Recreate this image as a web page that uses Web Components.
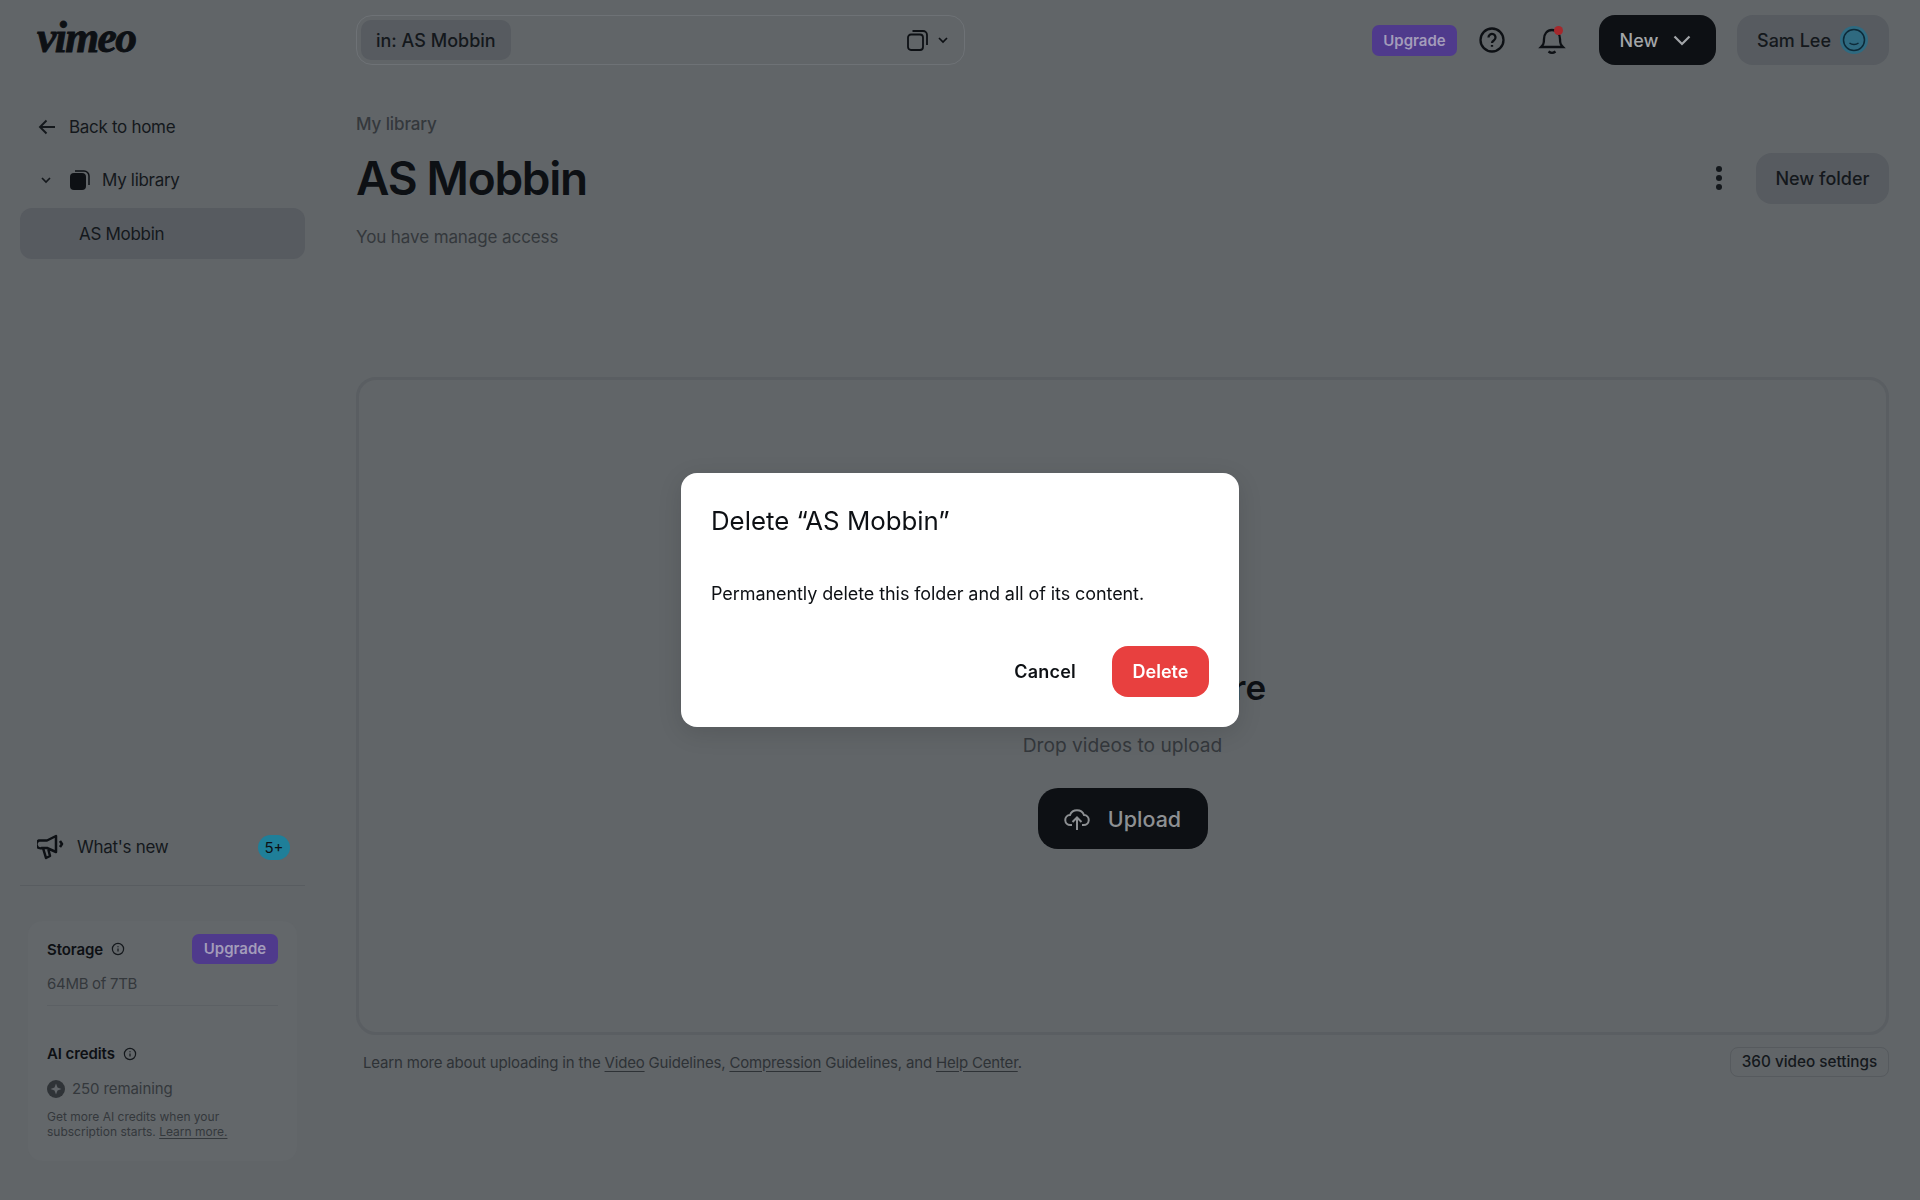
<!DOCTYPE html>
<html lang="en">
<head>
<meta charset="utf-8">
<title>AS Mobbin</title>
<style>
  html, body { margin: 0; height: 100%; background: #616568; }
  body { font-family: Inter, "Liberation Sans", sans-serif; color: #0d1014; }
  #app { display: grid; grid-template-columns: 356px 1fr; grid-template-rows: 1fr; width: 1920px; height: 1200px; overflow: hidden; }
</style>
</head>
<body>
<div id="app">
  <vm-sidebar></vm-sidebar>
  <vm-main></vm-main>
</div>
<vm-dialog>
  <span slot="title">Delete “AS Mobbin”</span>
  Permanently delete this folder and all of its content.
</vm-dialog>

<script>
const info = `<svg width="14" height="14" viewBox="0 0 14 14" fill="none" stroke="#14181c" stroke-width="1.2"><circle cx="7" cy="7" r="5.6"/><path d="M7 6.4v3.2M7 4.2v1"/></svg>`

class VmSidebar extends HTMLElement{
    constructor(){
        super()
        this._shadowRoot = this.attachShadow({mode: 'open'})
    }
    connectedCallback(){
        this._shadowRoot.innerHTML = `
        <style>
            :host{ display: flex; flex-direction: column; height: 1200px; box-sizing: border-box; padding: 0 51px 39px 20px; font-size: 17px; letter-spacing: -.3px; color: #14181c; }
            .logo{ height: 80px; padding-left: 17px; font: italic 700 43.500px/74px "Liberation Serif", serif; letter-spacing: -1.6px; color: #0d1014; -webkit-text-stroke: .9px #0d1014; }
            .back{ display: flex; align-items: center; gap: 13px; height: 24px; margin: 35px 0 0 18px; }
            .lib{ display: flex; align-items: center; height: 24px; margin: 29px 0 0 21px; }
            .lib .ic{ margin: 0 12px 0 19px; }
            .active{ display: flex; align-items: center; height: 51px; margin-top: 16px; padding-left: 59px; background: #575b60; border-radius: 12px; }
            .spacer{ flex: 1; }
            .new{ display: flex; align-items: center; height: 32px; padding: 0 15px 0 17px; }
            .new span{ margin-left: 12px; flex: 1; }
            .new b{ width: 32px; height: 25px; border-radius: 13px; background: #1f7f99; font-weight: 400; font-size: 15px; letter-spacing: 0; text-align: center; line-height: 25px; color: #0d1014; }
            .rule{ height: 1px; background: #585c60; margin: 22px 0 35px; }
            .card{ margin: 0 8px; padding: 13px 19px 0; height: 240px; box-sizing: border-box; border-radius: 14px; background: #63676a; }
            .head{ display: flex; align-items: center; gap: 8px; font-size: 15px; font-weight: 600; letter-spacing: -.1px; color: #0d1014; }
            .up{ margin-left: auto; width: 86px; height: 30px; border-radius: 7px; background: #4f3a8c; color: #a39cba; font-size: 15px; font-weight: 600; letter-spacing: 0; text-align: center; line-height: 30px; }
            .muted{ color: #34383c; font-size: 15px; }
            .used{ margin-top: 10px; padding-bottom: 12px; border-bottom: 1px solid #5c6064; }
            .ai{ margin-top: 38px; }
            .rem{ display: flex; align-items: center; gap: 7px; margin-top: 16px; letter-spacing: -.1px; }
            .small{ margin-top: 11px; font-size: 12px; letter-spacing: 0; line-height: 15px; color: #34383c; }
            u{ text-underline-offset: 2px; }
        </style>
        <div class="logo">vimeo</div>
        <div class="back">
            <svg width="18" height="16" viewBox="0 0 18 16" fill="none" stroke="#14181c" stroke-width="1.9"><path d="M17 8H2M8.500 1.500 2 8l6.500 6.500"/></svg>
            Back to home
        </div>
        <div class="lib">
            <svg width="10" height="7" viewBox="0 0 10 7" fill="none" stroke="#14181c" stroke-width="1.700"><path d="m1 1 4 4 4-4"/></svg>
            <svg class="ic" width="20" height="20" viewBox="0 0 20 20"><rect x="0" y="3" width="16" height="17" rx="4" fill="#0d1014"/><path d="M5 1h9a5 5 0 0 1 5 5v9" fill="none" stroke="#0d1014" stroke-width="1.500"/></svg>
            My library
        </div>
        <div class="active">AS Mobbin</div>
        <div class="spacer"></div>
        <div class="new">
            <svg width="28" height="26" viewBox="0 0 28 26" fill="none" stroke="#0d1014" stroke-width="2.500" stroke-linejoin="round"><path d="M2 6.500h8L19 2v16l-9-4H5a4 4 0 0 1-3-7.500zM6 14l3 10 4-2-2-8M23 7l2 3-2 3"/></svg>
            <span>What's new</span><b>5+</b>
        </div>
        <div class="rule"></div>
        <div class="card">
            <div class="head">Storage ${info}<div class="up">Upgrade</div></div>
            <div class="muted used">64MB of 7TB</div>
            <div class="head ai">AI credits ${info}</div>
            <div class="muted rem">
                <svg width="18" height="18" viewBox="0 0 18 18"><circle cx="9" cy="9" r="9" fill="#2f3337"/><path d="M9 3.500 10.500 7.500 14.500 9 10.500 10.500 9 14.500 7.500 10.500 3.500 9 7.500 7.500z" fill="#62666a"/></svg>
                250 remaining
            </div>
            <div class="small">Get more AI credits when your<br>subscription starts. <u>Learn more.</u></div>
        </div>`
    }
}

class VmTopbar extends HTMLElement{
    constructor(){
        super()
        this._shadowRoot = this.attachShadow({mode: 'open'})
    }
    connectedCallback(){
        this._shadowRoot.innerHTML = `
        <style>
            :host{ display: flex; align-items: center; height: 50px; padding-top: 15px; font-size: 18px; font-weight: 500; color: #14181c; }
            .search{ box-sizing: border-box; width: 609px; height: 50px; display: flex; align-items: center; padding: 0 16px 0 4px; border: 1px solid #6e7276; border-radius: 16px; }
            .chip{ height: 40px; padding: 0 15px; display: flex; align-items: center; border-radius: 10px; background: #575b60; }
            .search svg:first-of-type{ margin: 0 10px 0 auto; }
            .up{ margin-left: auto; width: 85px; height: 31px; border-radius: 7px; background: #4f3a8c; color: #a39cba; font-size: 15px; font-weight: 600; text-align: center; line-height: 31px; }
            .help{ margin-left: 22px; }
            .bell{ margin-left: 33px; }
            .new{ margin-left: 33px; width: 117px; height: 50px; box-sizing: border-box; padding-right: 4px; border-radius: 16px; background: #0d1014; color: #a2a5a8; display: flex; align-items: center; justify-content: center; gap: 15px; }
            .user{ margin-left: 21px; width: 152px; height: 50px; box-sizing: border-box; border-radius: 16px; background: #575b60; display: flex; align-items: center; justify-content: space-between; padding: 0 21px 0 20px; }
        </style>
        <div class="search">
            <div class="chip">in: AS Mobbin</div>
            <svg width="21" height="21" viewBox="0 0 21 21" fill="none" stroke="#0d1014" stroke-width="1.800"><rect x="1" y="4.500" width="15" height="15.500" rx="3"/><path d="M5.500 1h10.500a4 4 0 0 1 4 4v10"/></svg>
            <svg width="10" height="7" viewBox="0 0 10 7" fill="none" stroke="#0d1014" stroke-width="1.700"><path d="m1 1 4 4 4-4"/></svg>
        </div>
        <div class="up">Upgrade</div>
        <svg class="help" width="26" height="26" viewBox="0 0 26 26" fill="none" stroke="#0d1014" stroke-width="2.300"><circle cx="13" cy="13" r="11.500"/><path d="M9.500 10.500a3.500 3.500 0 1 1 5.500 2.800c-1.300.8-2 1.400-2 2.700M13 18v1.800"/></svg>
        <svg class="bell" width="28" height="30" viewBox="0 0 28 30" fill="none" stroke="#0d1014" stroke-width="2.300"><path d="M3 22c2-2 3-3 3-8 0-5 3-9 8-9s8 4 8 9c0 5 1 6 3 8zM10.500 26.500c2 1.500 5 1.500 7 0"/><circle cx="20.500" cy="5.500" r="4.500" fill="#a5282c" stroke="none"/></svg>
        <div class="new">New
            <svg width="18" height="11" viewBox="0 0 18 11" fill="none" stroke="#a2a5a8" stroke-width="2.200"><path d="m1.500 1.500 7.500 7.500 7.500-7.500"/></svg>
        </div>
        <div class="user">Sam Lee
            <svg width="28" height="28" viewBox="0 0 28 28" fill="none"><circle cx="14" cy="14" r="14" fill="#2f6a80"/><circle cx="14" cy="14" r="10.500" stroke="#0d2a38" stroke-width="1.500"/><path d="M9.500 17c2.500 2 6.500 2 9 0" stroke="#0d2a38" stroke-width="1.500"/></svg>
        </div>`
    }
}

class VmDropzone extends HTMLElement{
    constructor(){
        super()
        this._shadowRoot = this.attachShadow({mode: 'open'})
    }
    connectedCallback(){
        this._shadowRoot.innerHTML = `
        <style>
            :host{ display: flex; flex-direction: column; align-items: center; box-sizing: border-box; height: 658px; padding-top: 285px; border: 3px solid #5a5e62; border-radius: 20px; }
            h2{ margin: 0; font-size: 35px; line-height: 44px; font-weight: 600; color: #0d1014; }
            p{ margin: 24px 0 0; font-size: 19.200px; line-height: 24px; color: #34383c; }
            .upload{ margin-top: 31px; width: 170px; height: 61px; border-radius: 20px; background: #0d1014; color: #8d9093; font-size: 21.500px; font-weight: 500; display: flex; align-items: center; justify-content: center; gap: 18px; }
        </style>
        <h2><slot name="title"></slot></h2>
        <p><slot name="hint"></slot></p>
        <div class="upload">
            <svg width="26" height="24" viewBox="0 0 26 24" fill="none" stroke="#8d9093" stroke-width="2"><path d="M8 18H6.500a5 5 0 0 1-.5-10 7.500 7.500 0 0 1 14 0 5 5 0 0 1-.5 10H18M13 23V11M8.500 15 13 10.500 17.500 15"/></svg>
            <slot></slot>
        </div>`
    }
}

class VmMain extends HTMLElement{
    constructor(){
        super()
        this._shadowRoot = this.attachShadow({mode: 'open'})
    }
    connectedCallback(){
        this._shadowRoot.innerHTML = `
        <style>
            :host{ display: block; padding-right: 31px; }
            .crumb{ margin-top: 47px; font-size: 17px; letter-spacing: -.1px; line-height: 24px; color: #34383c; font-weight: 500; }
            .title{ display: flex; align-items: center; margin-top: 17px; height: 51px; }
            h1{ margin: 0; font-size: 46px; line-height: 51px; font-weight: 600; letter-spacing: -1.300px; color: #0d1014; }
            .dots{ margin-left: auto; margin-top: -2px; }
            .folder{ margin-left: 34px; width: 133px; height: 51px; border-radius: 16px; background: #575b60; font-size: 18px; font-weight: 500; display: flex; align-items: center; justify-content: center; color: #14181c; }
            .access{ margin: 21px 0 128px; font-size: 17px; letter-spacing: -.1px; line-height: 24px; color: #34383c; }
            .foot{ display: flex; align-items: center; justify-content: space-between; margin-top: 12px; padding-left: 7px; font-size: 15px; letter-spacing: -.18px; color: #2e3236; }
            .foot u{ text-underline-offset: 3px; }
            .s360{ box-sizing: border-box; width: 159px; height: 30px; border: 1px solid #565a5e; border-radius: 8px; font-size: 15.300px; font-weight: 500; letter-spacing: 0; color: #14181c; text-align: center; line-height: 28px; }
        </style>
        <vm-topbar></vm-topbar>
        <div class="crumb">My library</div>
        <div class="title">
            <h1>AS Mobbin</h1>
            <svg class="dots" width="6" height="24" viewBox="0 0 6 24" fill="#14181c"><circle cx="3" cy="3" r="3"/><circle cx="3" cy="12" r="3"/><circle cx="3" cy="21" r="3"/></svg>
            <div class="folder">New folder</div>
        </div>
        <div class="access">You have manage access</div>
        <vm-dropzone>
            <span slot="title">Drag videos here</span>
            <span slot="hint">Drop videos to upload</span>
            Upload
        </vm-dropzone>
        <div class="foot">
            <span>Learn more about uploading in the <u>Video</u> Guidelines, <u>Compression</u> Guidelines, and <u>Help Center</u>.</span>
            <div class="s360">360 video settings</div>
        </div>`
    }
}

class VmDialog extends HTMLElement{
    constructor(){
        super()
        this._shadowRoot = this.attachShadow({mode: 'open'})
    }
    connectedCallback(){
        this._shadowRoot.innerHTML = `
        <style>
            :host{ position: fixed; left: 681px; top: 473px; width: 558px; height: 254px; box-sizing: border-box; padding: 33px 30px 30px; display: flex; flex-direction: column; background: #fff; border-radius: 16px; box-shadow: 0 6px 24px rgba(0,0,0,.12); color: #0d1014; font-size: 18px; }
            .title{ font-size: 25.800px; line-height: 30px; }
            .body{ margin-top: 46px; line-height: 24px; letter-spacing: -.08px; flex: 1; }
            .actions{ display: flex; justify-content: flex-end; align-items: center; gap: 36px; }
            .cancel{ font-weight: 600; letter-spacing: .2px; }
            .delete{ width: 97px; height: 51px; border-radius: 16px; background: #e8403f; color: #fff; font-weight: 600; display: flex; align-items: center; justify-content: center; }
        </style>
        <div class="title"><slot name="title"></slot></div>
        <div class="body"><slot></slot></div>
        <div class="actions"><span class="cancel">Cancel</span><span class="delete">Delete</span></div>`
    }
}

window.customElements.define('vm-sidebar', VmSidebar)
window.customElements.define('vm-topbar', VmTopbar)
window.customElements.define('vm-dropzone', VmDropzone)
window.customElements.define('vm-main', VmMain)
window.customElements.define('vm-dialog', VmDialog)
</script>
</body>
</html>
